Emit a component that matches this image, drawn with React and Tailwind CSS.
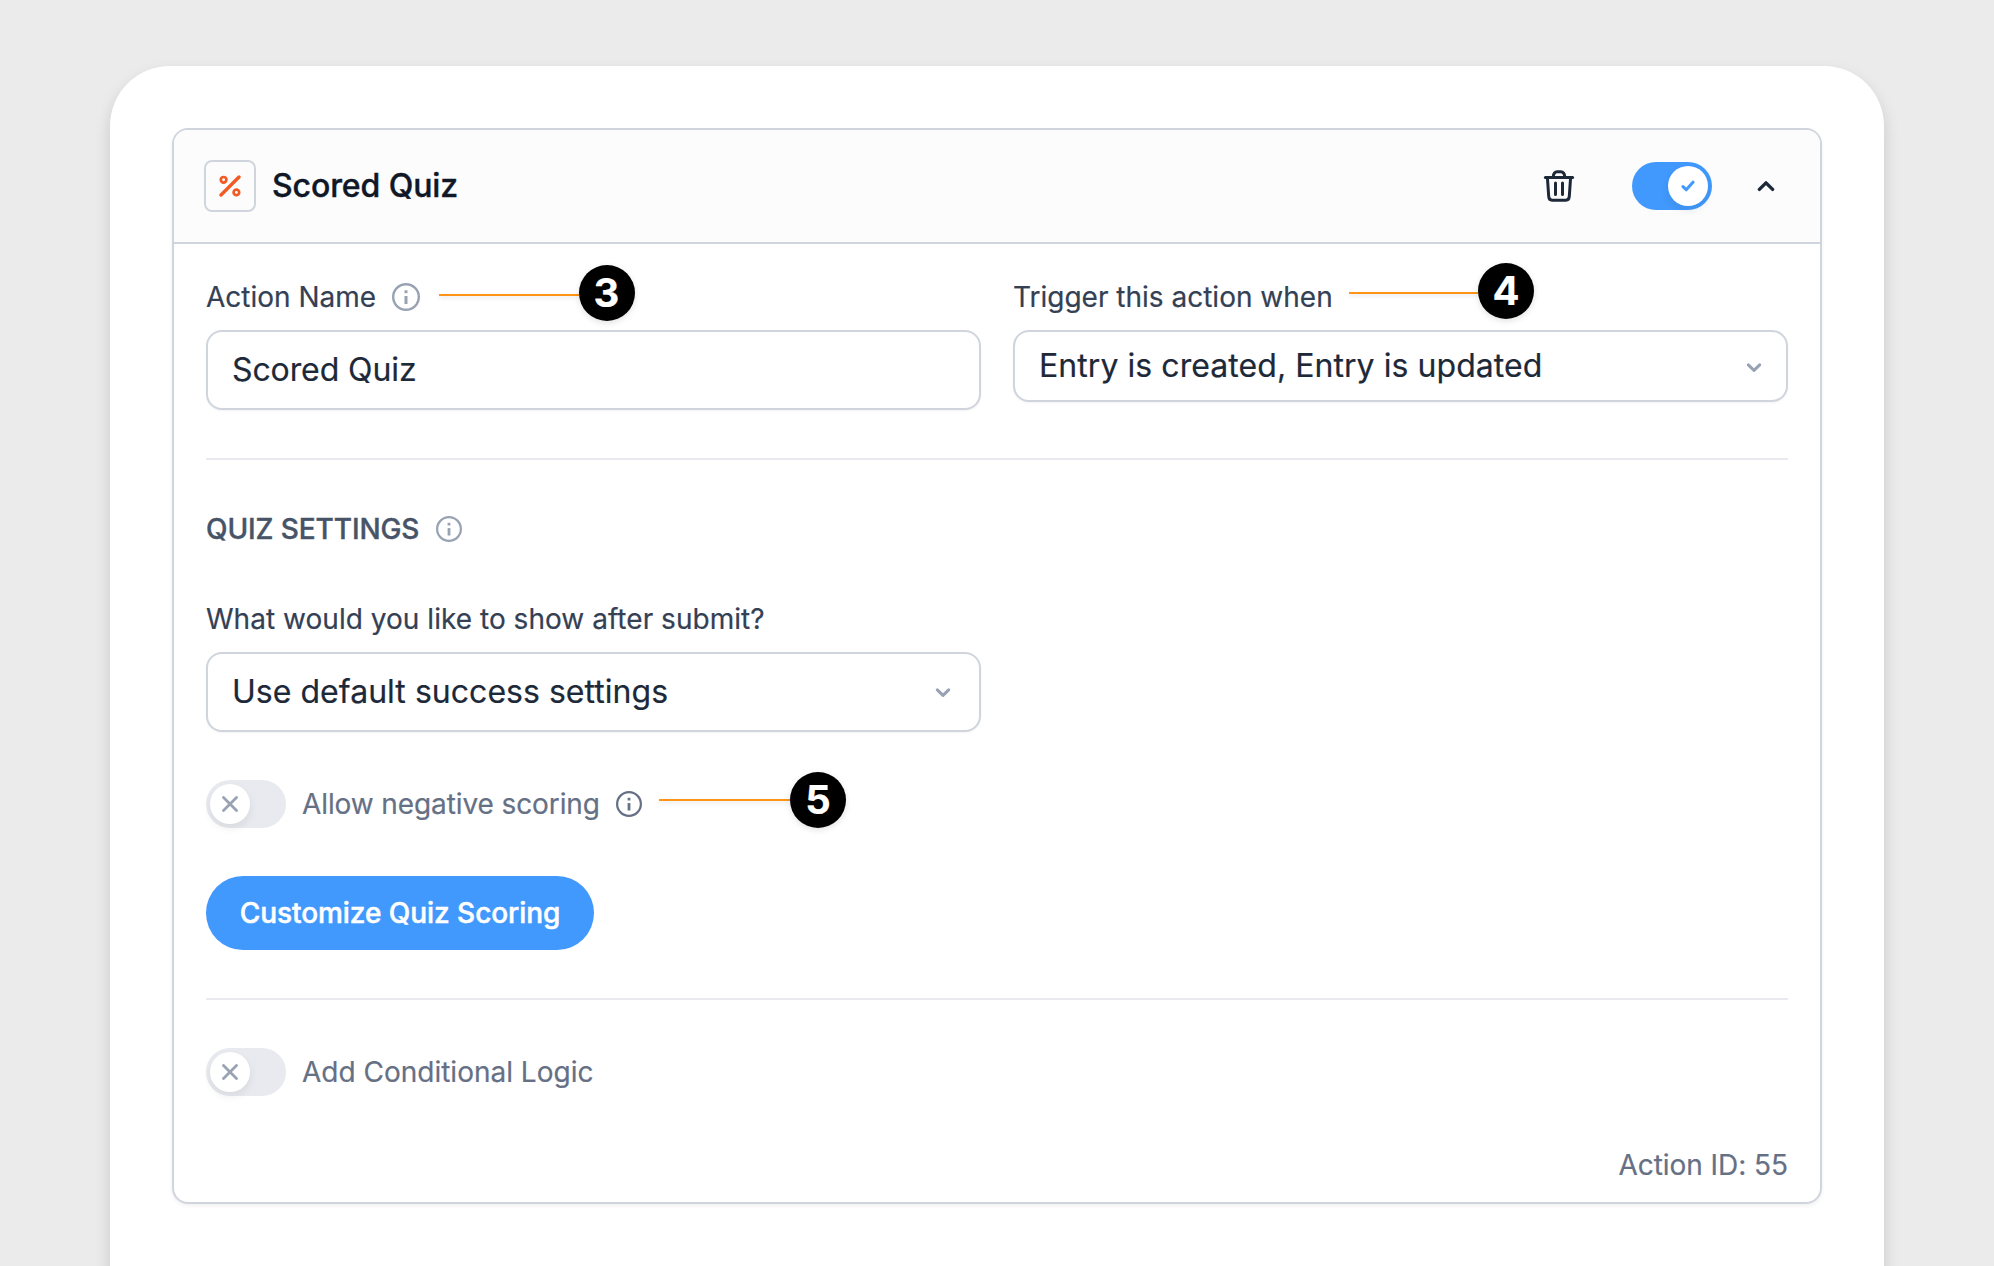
import React, { useState } from 'react';

const InfoIcon = ({ size = 28, className = '' }) => (
  <svg width={size} height={size} viewBox="0 0 28 28" fill="none" className={`shrink-0 ${className}`}>
    <circle cx="14" cy="14" r="12.8" stroke="currentColor" strokeWidth="2.4" />
    <path d="M14 13v8" stroke="currentColor" strokeWidth="3" />
    <path d="M14 7.3v2.9" stroke="currentColor" strokeWidth="3" />
  </svg>
);

const PercentIcon = () => (
  <svg width="22" height="22" viewBox="0 0 22 22" fill="none" stroke="#f15a24" strokeLinecap="round">
    <path d="M2 20L20 2" strokeWidth="3.4" />
    <circle cx="4.6" cy="4.8" r="2.8" strokeWidth="2.7" />
    <circle cx="17.4" cy="17.4" r="2.8" strokeWidth="2.7" />
  </svg>
);

const TrashIcon = () => (
  <svg width="32" height="34" viewBox="0 0 32 34" fill="none" stroke="#1d2939" strokeWidth="3" strokeLinecap="round" strokeLinejoin="round">
    <path d="M2.4 8.4h27.2" />
    <path d="M10.2 8c.3-3.8 1.6-5.2 4-5.2h3.6c2.4 0 3.7 1.4 4 5.2" />
    <path d="M4.4 8.6l1.3 18.8c.2 2.6 1.2 3.8 3.4 3.8h13.8c2.2 0 3.2-1.2 3.4-3.8l1.3-18.8" />
    <path d="M12.5 14v11.4M19.5 14v11.4" />
  </svg>
);

const Chevron = ({ up = false, className = '' }) => (
  <svg width={up ? 18 : 16} height={up ? 12 : 11} viewBox="0 0 18 12" fill="none" className={className}>
    <path
      d={up ? 'M2.4 9.4L9 2.9l6.6 6.5' : 'M2.6 3L9 9.3 15.4 3'}
      stroke="currentColor"
      strokeWidth="3.4"
      strokeLinecap="round"
      strokeLinejoin="round"
    />
  </svg>
);

const Toggle = ({ checked, onChange }) => (
  <button
    type="button"
    role="switch"
    aria-checked={checked}
    onClick={() => onChange(!checked)}
    className={`flex h-12 w-20 shrink-0 items-center rounded-full p-1 ${checked ? 'justify-end bg-[#4199fd]' : 'justify-start bg-[#e9eaef]'}`}
  >
    <span className="flex size-10 items-center justify-center rounded-full bg-white shadow-[0_4px_8px_rgba(16,24,40,0.08)]">
      {checked ? (
        <svg width="14" height="12" viewBox="0 0 14 12" fill="none" stroke="#4199fd" strokeWidth="3" strokeLinecap="round" strokeLinejoin="round">
          <path d="M2 6.6l3.2 3.2L12 2.2" />
        </svg>
      ) : (
        <svg width="16" height="16" viewBox="0 0 16 16" fill="none" stroke="#98a2b3" strokeWidth="2.8" strokeLinecap="round">
          <path d="M1.5 1.5l13 13M14.5 1.5l-13 13" />
        </svg>
      )}
    </span>
  </button>
);

// Numbered marker with a leader line, floats over the form
const Callout = ({ number, lineClass, className }) => (
  <div className={`pointer-events-none absolute flex items-center ${className}`}>
    <span className={`h-[2px] bg-[#ff9416] shadow-[0_2px_4px_rgba(0,0,0,0.12)] ${lineClass}`} />
    <span className="flex size-14 items-center justify-center rounded-full bg-black pb-px text-[40px] leading-none font-bold text-white shadow-[0_2px_6px_rgba(0,0,0,0.12)]">
      {number}
    </span>
  </div>
);

const Field = ({ className = '', children }) => (
  <div className={`flex items-center justify-between rounded-2xl border-2 border-[#d0d5dd] bg-white pl-6 text-[32px] text-[#1d2939] shadow-[0_1px_2px_rgba(16,24,40,0.05)] ${className}`}>
    {children}
  </div>
);

const App = () => {
  const [enabled, setEnabled] = useState(true);
  const [negative, setNegative] = useState(false);
  const [conditional, setConditional] = useState(false);

  return (
    <div className="h-[1266px] overflow-hidden bg-[#ebebeb] px-[110px] pt-[66px] font-['Inter',sans-serif] [-webkit-text-stroke:0.2px]">
      <div className="h-[1300px] rounded-t-[60px] bg-white px-[62px] pt-[62px] shadow-[0_8px_16px_rgba(0,0,0,0.15)]">
        <div className="h-[1076px] overflow-hidden rounded-2xl border-2 border-[#d0d5dd] shadow-[0_2px_4px_rgba(16,24,40,0.06)]">

          {/* Header */}
          <div className="flex h-[114px] items-center border-b-2 border-[#d0d5dd] bg-[#fcfcfd] pr-[45px] pl-[30px]">
            <div className="flex size-[52px] items-center justify-center rounded-lg border-2 border-[#d0d5dd]">
              <PercentIcon />
            </div>
            <h2 className="ml-4 text-[32px] font-medium tracking-[-0.1px] text-[#101828] [-webkit-text-stroke:0.4px]">Scored Quiz</h2>
            <div className="ml-auto flex items-center">
              <TrashIcon />
              <div className="mr-[45px] ml-[57px]">
                <Toggle checked={enabled} onChange={setEnabled} />
              </div>
              <Chevron up className="text-[#1d2939]" />
            </div>
          </div>

          <div className="px-8 text-[28px] leading-[40px]">
            {/* Name and trigger */}
            <div className="grid grid-cols-2 items-start gap-8 pt-[33px]">
              <div className="relative">
                <div className="flex items-center gap-4 text-[#344054]">
                  Action Name
                  <InfoIcon className="text-[#98a2b3]" />
                </div>
                <Field className="mt-[13px] h-20 tracking-[-0.1px]">Scored Quiz</Field>
                <Callout number={3} lineClass="mt-[3px] w-[140px]" className="top-[-12px] left-[232.5px]" />
              </div>
              <div className="relative">
                <div className="text-[#344054]">Trigger this action when</div>
                <Field className="mt-[13px] h-[72px] pr-6 tracking-[0.06px]">
                  Entry is created, Entry is updated
                  <Chevron className="mt-[2px] text-[#98a2b3]" />
                </Field>
                <Callout number={4} lineClass="mt-[4px] w-[129px]" className="top-[-14px] left-[336px]" />
              </div>
            </div>

            <hr className="mt-12 border-t-2 border-[#e9eaef]" />

            {/* Quiz settings */}
            <div className="mt-[49px] flex items-center gap-[17px] font-medium tracking-[-0.1px] text-[#475467] [-webkit-text-stroke:0.4px]">
              QUIZ SETTINGS
              <InfoIcon size={26} className="text-[#98a2b3]" />
            </div>

            <div className="mt-[50px] tracking-[0.03px] text-[#344054]">What would you like to show after submit?</div>
            <Field className="mt-[13px] h-20 w-[775px] pr-[28px] tracking-[0.03px]">
              Use default success settings
              <Chevron className="mt-px text-[#98a2b3]" />
            </Field>

            <div className="relative mt-12 flex items-center text-[#667085]">
              <Toggle checked={negative} onChange={setNegative} />
              <span className="mr-4 ml-4 tracking-[-0.1px]">Allow negative scoring</span>
              <InfoIcon size={26} />
              <Callout number={5} lineClass="w-[131px]" className="top-[-8px] left-[453px]" />
            </div>

            <button type="button" className="mt-12 flex h-[74px] w-[388px] items-center justify-center rounded-full bg-[#4199fd] font-medium tracking-[-0.05px] text-white [-webkit-text-stroke:0.5px]">
              Customize Quiz Scoring
            </button>

            <hr className="mt-12 border-t-2 border-[#e9eaef]" />

            <div className="mt-12 flex items-center gap-4 text-[#667085]">
              <Toggle checked={conditional} onChange={setConditional} />
              Add Conditional Logic
            </div>

            <div className="mt-[49px] text-right tracking-[-0.05px] text-[#667085]">Action ID: 55</div>
          </div>
        </div>
      </div>
    </div>
  );
};

export default App;
